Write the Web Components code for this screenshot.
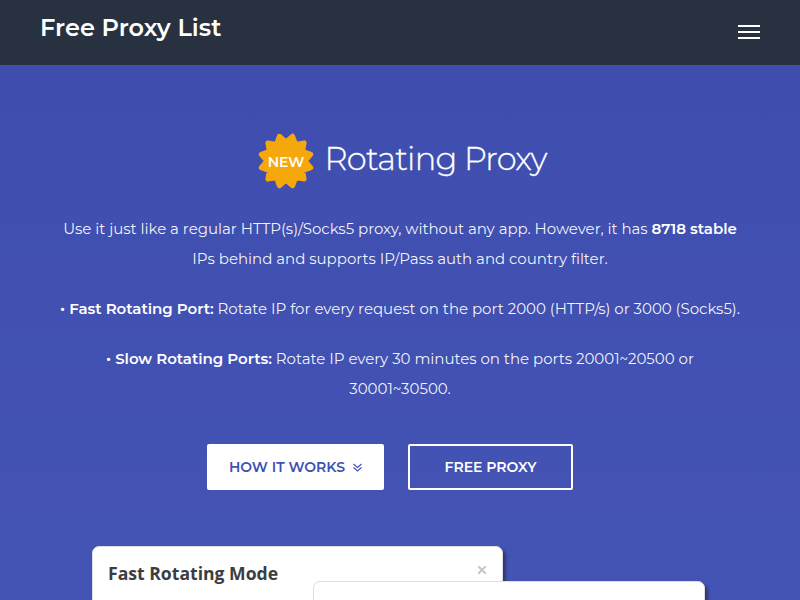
<!DOCTYPE html>
<html lang="en">
<head>
<meta charset="utf-8">
<title>Free Proxy List</title>
<style>
  html, body { margin: 0; height: 600px; overflow: hidden; }
  body { font-family: Montserrat, Inter, "Open Sans", sans-serif; color: #fff; background: #4352b3; }
</style>
</head>
<body>
<proxy-page></proxy-page>
<script>
class SiteHeader extends HTMLElement {
  connectedCallback() {
    this.attachShadow({ mode: 'open' }).innerHTML = `
      <style>
        :host { display: flex; justify-content: space-between; align-items: flex-start;
          box-sizing: border-box; height: 65px; padding: 0 40px; background: #28313f; }
        .brand { font-size: 24px; font-weight: 600; line-height: 30px; padding-top: 13px; letter-spacing: .04px; }
        svg { display: block; margin-top: 25px; }
      </style>
      <div class="brand">Free Proxy List</div>
      <svg width="22" height="14" fill="#fff"><path d="M0 0h22v2H0zM0 6h22v2H0zM0 12h22v2H0z"/></svg>`;
  }
}

class NewBadge extends HTMLElement {
  connectedCallback() {
    const points = Array.from({ length: 24 }, (_, i) => {
      const a = (15 + i * 15) * Math.PI / 180, r = i % 2 ? 19.2 : 25.6;
      return (28 + r * Math.sin(a)).toFixed(2) + ',' + (28 - r * Math.cos(a)).toFixed(2);
    }).join(' ');
    this.attachShadow({ mode: 'open' }).innerHTML = `
      <style>
        :host { display: grid; width: 56px; height: 56px; place-items: center; }
        svg, span { grid-area: 1 / 1; }
        span { font-size: 14px; font-weight: 600; line-height: 20px; padding-top: 2px; }
      </style>
      <svg width="56" height="56"><polygon points="${points}" fill="#f5a80c" stroke="#f5a80c" stroke-width="5" stroke-linejoin="round"/></svg>
      <span>NEW</span>`;
  }
}

class CopyText extends HTMLElement {
  connectedCallback() {
    this.attachShadow({ mode: 'open' }).innerHTML = `
      <style>:host { display: block; text-align: center; line-height: 30px; font-size: 15px; font-weight: 400; letter-spacing: -.025px; color: rgba(255,255,255,.95); }
      ::slotted(b) { font-weight: 600; color: #fff; }</style><slot></slot>`;
  }
}

class ActionButton extends HTMLElement {
  connectedCallback() {
    this.attachShadow({ mode: 'open' }).innerHTML = `
      <style>
        :host { display: flex; box-sizing: border-box; width: 165px; height: 46px; align-items: center; justify-content: center;
          gap: 8px; border: 2px solid #fff; border-radius: 2px; font-size: 14px; font-weight: 600; line-height: 20px; }
        :host([solid]) { width: 177px; background: #fff; color: #4051b2; }
      </style><slot></slot>`;
  }
}

class DialogCard extends HTMLElement {
  connectedCallback() {
    this.attachShadow({ mode: 'open' }).innerHTML = `
      <style>
        :host { display: flex; box-sizing: border-box; justify-content: space-between; align-items: flex-start;
          padding: 13px 16px 0 15px; background: #fff; border: 1px solid #dcdde3; border-radius: 7px 7px 0 0;
          box-shadow: 3px 3px 3px rgba(30,30,50,.5); color: #3b3d42;
          font: 700 17.6px/27px "Open Sans", sans-serif; }
      </style><slot></slot>`;
  }
}

class ProxyPage extends HTMLElement {
  connectedCallback() {
    this.attachShadow({ mode: 'open' }).innerHTML = `
      <style>
        :host { display: block; width: 800px; height: 600px; overflow: hidden; }
        main { height: 535px; background: linear-gradient(#3f4eae, #4454b5); display: flex; flex-direction: column; }
        .hero { display: flex; gap: 10.5px; margin: 68px 0 0 258px; }
        h1 { font-size: 32px; line-height: 42px; font-weight: 300; margin: 5px 0 0; white-space: nowrap; letter-spacing: -.75px; -webkit-text-stroke: .3px #fff; }
        .copy { margin: 25px 50px 0; }
        copy-text + copy-text { margin-top: 20px; }
        .actions { display: flex; gap: 24px; margin: 40px 0 0 207px; }
        .stage { position: relative; margin-top: 56px; height: 54px; }
        dialog-card { position: absolute; height: 120px; }
        .one { left: 92px; top: 0; width: 411px; }
        .two { left: 313px; top: 35px; width: 392px; }
        .close { margin-top: 6px; }
      </style>
      <site-header></site-header>
      <main>
        <div class="hero"><new-badge></new-badge><h1>Rotating Proxy</h1></div>
        <div class="copy">
          <copy-text>Use it just like a regular HTTP(s)/Socks5 proxy, without any app. However, it has <b>8718 stable</b><br>IPs behind and supports IP/Pass auth and country filter.</copy-text>
          <copy-text><b>• Fast Rotating Port:</b> Rotate IP for every request on the port 2000 (HTTP/s) or 3000 (Socks5).</copy-text>
          <copy-text><b>• Slow Rotating Ports:</b> Rotate IP every 30 minutes on the ports 20001~20500 or<br>30001~30500.</copy-text>
        </div>
        <div class="actions">
          <action-button solid><span>HOW IT WORKS</span>
            <svg width="9" height="9" fill="none" stroke="#4051b2" stroke-width="1.1"><path d="M.5 1l4 3.5 4-3.5M.5 4.5l4 3.5 4-3.5"/></svg></action-button>
          <action-button><span>FREE PROXY</span></action-button>
        </div>
        <div class="stage">
          <dialog-card class="one"><span>Fast Rotating Mode</span>
            <svg class="close" width="8" height="8" stroke="#c6c6c6" stroke-width="2"><path d="M0 0l8 8M8 0L0 8"/></svg></dialog-card>
          <dialog-card class="two"></dialog-card>
        </div>
      </main>`;
  }
}

customElements.define('site-header', SiteHeader);
customElements.define('new-badge', NewBadge);
customElements.define('copy-text', CopyText);
customElements.define('action-button', ActionButton);
customElements.define('dialog-card', DialogCard);
customElements.define('proxy-page', ProxyPage);
</script>
</body>
</html>
